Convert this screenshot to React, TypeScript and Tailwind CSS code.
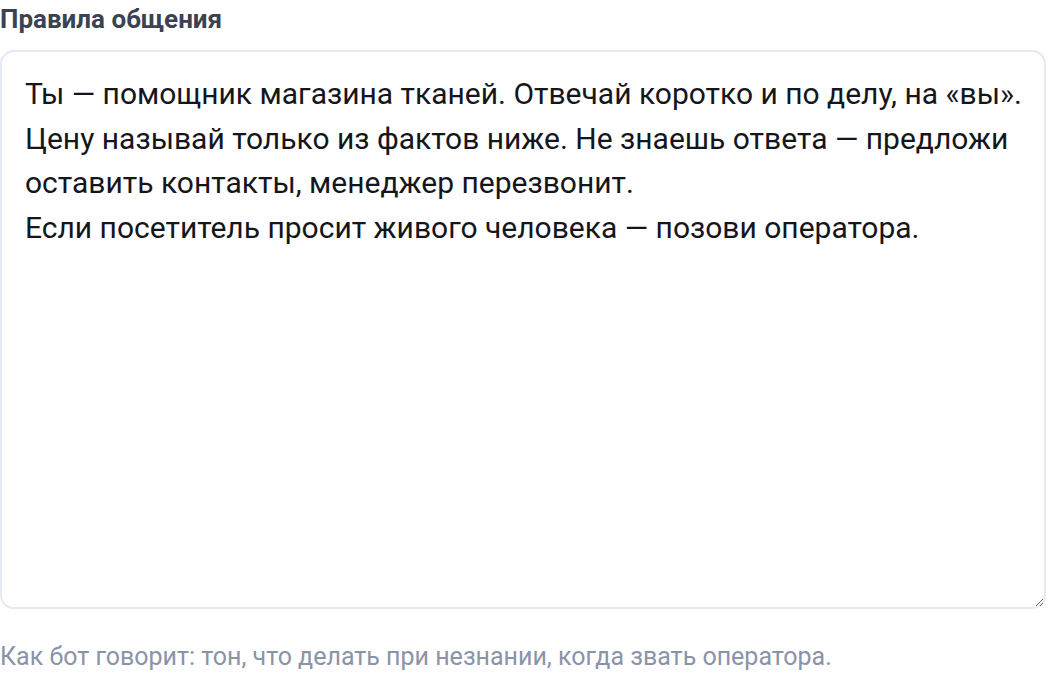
import { useState } from 'react';

const DEFAULT_RULES = `Ты — помощник магазина тканей. Отвечай коротко и по делу, на «вы».
Цену называй только из фактов ниже. Не знаешь ответа — предложи оставить контакты, менеджер перезвонит.
Если посетитель просит живого человека — позови оператора.`;

export default function App() {
  const [rules, setRules] = useState(DEFAULT_RULES);

  return (
    <div className="w-[1048px] h-[674px] bg-white font-['Roboto',sans-serif]">
      <label htmlFor="rules" className="block pt-[4px] text-[26px] leading-[30px] font-bold text-[#3b4252]">
        Правила общения
      </label>
      <textarea
        id="rules"
        value={rules}
        onChange={(e) => setRules(e.target.value)}
        className="mt-[16px] block w-[1046px] h-[559px] rounded-[14px] border-2 border-[#e6e8f2] bg-white pl-[23px] pr-[14px] pt-[20px] pb-[20px] text-[30px] leading-[44.5px] text-[#14161c] outline-none resize-y"
      />
      <p className="mt-[33px] text-[25px] leading-[30px] text-[#8a93a8]">
        Как бот говорит: тон, что делать при незнании, когда звать оператора.
      </p>
    </div>
  );
}
